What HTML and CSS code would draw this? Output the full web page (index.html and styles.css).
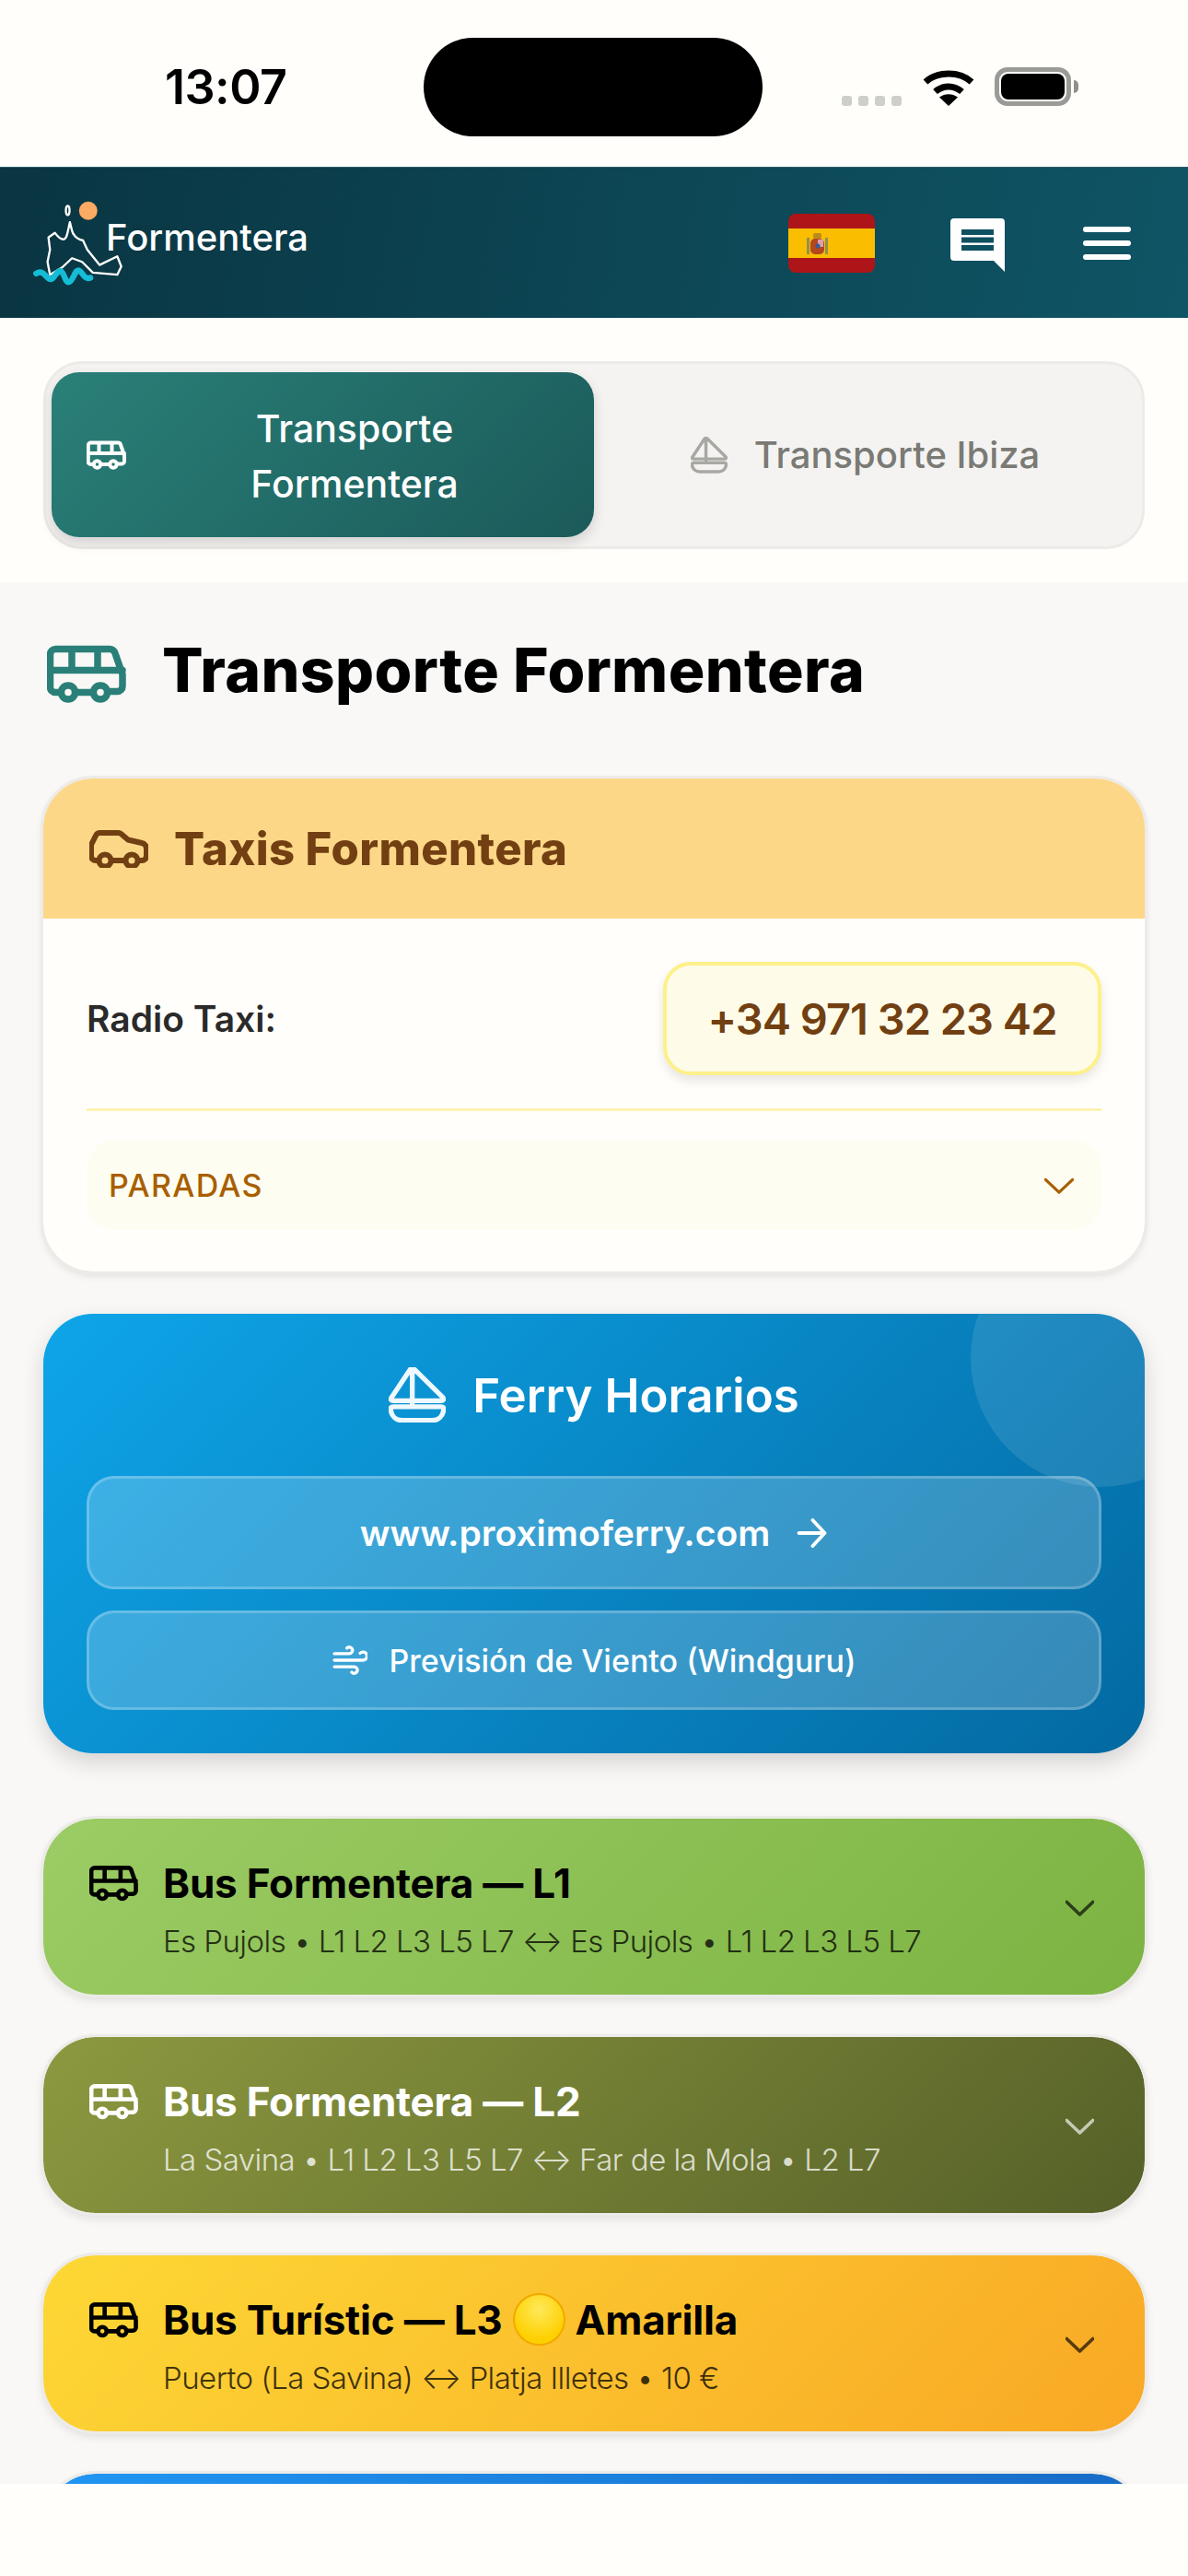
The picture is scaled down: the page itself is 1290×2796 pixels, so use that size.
FILE: index.html
```html
<!DOCTYPE html>
<html lang="es">
<head>
    <meta charset="utf-8" />
    <title>Transporte Formentera</title>
    <link rel="stylesheet" href="styles.css">
</head>
<body>

<svg class="defs" width="0" height="0">
    <symbol id="bus" viewBox="11 11 86 62">
        <path d="M24 62h-4a5.5 5.5 0 0 1-5.500-5.500V21a6 6 0 0 1 6-6H79a6 6 0 0 1 6 4.500l8 23v13a5.500 5.500 0 0 1-5.500 5.500H80M59 62H44M14.700 38H93M38 15v23M66 15v23" />
        <circle cx="34" cy="62" r="7.500" />
        <circle cx="69" cy="62" r="7.500" />
    </symbol>
    <symbol id="boat" viewBox="10 8 58 56">
        <path d="M32 10 13 38.500Q11 42 15 42H63Q67 42 65 38.500L36 10Q34 8 32 10ZM34 10V48M15 48H63Q66 48 66 51C65 58 60 62 54 62H24C18 62 13 58 12 51Q12 48 15 48Z" />
    </symbol>
    <symbol id="chevron" viewBox="6 9 12 6">
        <path d="M6.500 9.500 12 14.700 17.500 9.500" />
    </symbol>
</svg>

<div class="status">
    <span class="clock">13:07</span>
    <div class="island"></div>
    <div class="status-right">
        <div class="signal"><i></i><i></i><i></i><i></i></div>
        <svg class="wifi" viewBox="0 0 56 41">
            <path d="M3 15C16 3 40 3 53 15" />
            <path d="M13.500 25.500C22 18 34 18 42.500 25.500" />
            <path class="wedge" d="M28 41 18 31.500C24 27 32 27 38 31.500Z" />
        </svg>
        <div class="battery"><div class="battery-fill"></div></div>
        <div class="battery-nub"></div>
    </div>
</div>

<header class="topbar">
    <a class="logo" href="#">
        <svg class="logo-mark" viewBox="45 75 295 285">
            <circle class="sun" cx="225" cy="113" r="30" />
            <ellipse class="isle" cx="158" cy="112" rx="6" ry="15" />
            <path class="isle" d="M165 150 172 178C176 192 186 205 208 210L222 240 262 290 320 262 333 295 320 322 240 315 205 280 172 268 140 298 100 322 92 280 100 240 95 200 116 185C124 195 132 208 146 206 156 204 158 180 165 150Z" />
            <path class="wave" d="M55 318C75 305 82 325 97 335S122 305 135 310 148 348 162 346 182 302 195 308 212 340 232 332" />
        </svg>
        <span class="logo-text">Formentera</span>
    </a>
    <div class="topbar-right">
        <svg class="flag" viewBox="0 0 94 64">
            <rect width="94" height="64" fill="#ad1519" />
            <rect y="16" width="94" height="32" fill="#fabd00" />
            <rect x="20" y="26" width="3" height="18" fill="#8f8f50" />
            <rect x="40" y="26" width="3" height="18" fill="#8f8f50" />
            <rect x="24" y="27" width="15" height="17" rx="5" fill="#b3471d" />
            <rect x="32" y="28" width="6" height="8" fill="#d9a0b0" />
            <circle cx="32" cy="35" r="2.500" fill="#3a5a9a" />
            <rect x="27" y="21" width="9" height="6" rx="2" fill="#b98a1c" />
        </svg>
        <svg class="chat" viewBox="0 0 59 58">
            <path class="chat-body" d="M4 0h51a4 4 0 0 1 4 4v54L47 46H4a4 4 0 0 1-4-4V4a4 4 0 0 1 4-4z" />
            <path class="chat-lines" d="M12 12h35v6H12zM12 20.500h35v6H12zM12 29h35v6H12z" />
        </svg>
        <div class="burger"><i></i><i></i><i></i></div>
    </div>
</header>

<section class="tabs-wrap">
    <div class="tabs">
        <a class="tab tab-on" href="#">
            <svg class="icon tab-bus"><use href="#bus" /></svg>
            <span class="tab-label">Transporte<br />Formentera</span>
        </a>
        <a class="tab tab-off" href="#">
            <svg class="icon tab-boat"><use href="#boat" /></svg>
            <span>Transporte Ibiza</span>
        </a>
    </div>
</section>

<main class="main">
    <h1 class="page-title">
        <svg class="icon title-bus"><use href="#bus" /></svg>
        <span class="page-title-text">Transporte Formentera</span>
    </h1>

    <div class="taxi">
        <div class="taxi-head">
            <svg class="icon car" viewBox="12 8 64 41">
                <path d="M22 41h-3a5 5 0 0 1-5-5V24l5-10a5 5 0 0 1 4-3h20a5 5 0 0 1 4 1.500l7 6 15 3.500a6 6 0 0 1 5 6v8a5 5 0 0 1-5 5h-4M51 41H36" />
                <circle cx="29" cy="41" r="6.500" />
                <circle cx="58" cy="41" r="6.500" />
            </svg>
            <h2>Taxis Formentera</h2>
        </div>
        <div class="taxi-body">
            <div class="taxi-row">
                <span class="taxi-label">Radio Taxi:</span>
                <a class="phone" href="#">+34 971 32 23 42</a>
            </div>
            <div class="taxi-line"></div>
            <div class="stops">
                <span>PARADAS</span>
                <svg class="icon stops-arrow"><use href="#chevron" /></svg>
            </div>
        </div>
    </div>

    <div class="ferry">
        <div class="ferry-circle"></div>
        <h2 class="ferry-title">
            <svg class="icon ferry-boat"><use href="#boat" /></svg>
            Ferry Horarios
        </h2>
        <a class="ferry-btn ferry-web" href="#">
            www.proximoferry.com
            <svg class="icon arrow" viewBox="4 4 16 16"><path d="M5 12h14M12.500 5l6.500 7-6.500 7" /></svg>
        </a>
        <a class="ferry-btn ferry-wind" href="#">
            <svg class="icon wind" viewBox="1 3 21 18"><path d="M17.700 7.700a2.500 2.500 0 1 1 1.800 4.300H2M9.600 4.600A2 2 0 1 1 11 8H2M12.600 19.400A2 2 0 1 0 14 16H2" /></svg>
            Previsión de Viento (Windguru)
        </a>
    </div>

    <div class="lines">
        <div class="line line-1">
            <div class="line-text">
                <div class="line-title"><svg class="icon line-bus"><use href="#bus" /></svg>Bus Formentera — L1</div>
                <div class="line-sub">Es Pujols • L1 L2 L3 L5 L7 ↔ Es Pujols • L1 L2 L3 L5 L7</div>
            </div>
            <svg class="icon line-arrow"><use href="#chevron" /></svg>
        </div>
        <div class="line line-2">
            <div class="line-text">
                <div class="line-title"><svg class="icon line-bus"><use href="#bus" /></svg>Bus Formentera — L2</div>
                <div class="line-sub">La Savina • L1 L2 L3 L5 L7 ↔ Far de la Mola • L2 L7</div>
            </div>
            <svg class="icon line-arrow"><use href="#chevron" /></svg>
        </div>
        <div class="line line-3">
            <div class="line-text">
                <div class="line-title"><svg class="icon line-bus"><use href="#bus" /></svg>Bus Turístic — L3<span class="dot"></span>Amarilla</div>
                <div class="line-sub">Puerto (La Savina) ↔ Platja Illetes • 10 €</div>
            </div>
            <svg class="icon line-arrow"><use href="#chevron" /></svg>
        </div>
        <div class="line line-4"></div>
    </div>
</main>

<div class="bottom"></div>

</body>
</html>
```

FILE: styles.css
```css
* { box-sizing: border-box; }
html, body { margin: 0; padding: 0; }
body { width: 1290px; height: 2796px; display: flex; flex-direction: column; overflow: hidden; background: #fffefb; font-family: Inter, "Liberation Sans", sans-serif; color: #000; }
a { color: inherit; text-decoration: none; }
h1, h2 { margin: 0; }
.defs { position: absolute; }
.icon { fill: none; stroke: currentColor; stroke-linecap: round; stroke-linejoin: round; flex: none; display: block; }

/* status bar */
.status { height: 181px; flex: none; display: flex; padding: 41px 119px 0 179px; }
.clock { font-size: 52px; font-weight: 600; line-height: 1; margin-top: 28px; width: 282px; letter-spacing: -.5px; }
.island { width: 369px; height: 107px; border-radius: 54px; background: #000; }
.status-right { display: flex; align-items: flex-end; height: 74px; margin-left: 86px; flex: none; }
.signal { display: flex; gap: 7px; margin-right: 23px; }
.signal i { width: 11px; height: 11px; border-radius: 3px; background: #cfcfca; }
.wifi { width: 56px; height: 41px; fill: none; stroke: #000; stroke-width: 7; margin-right: 22px; }
.wifi .wedge { fill: #000; stroke: none; }
.battery { width: 83px; height: 42px; border: 5px solid #9a9a96; border-radius: 14px; padding: 2px; }
.battery-fill { height: 100%; background: #000; border-radius: 8px; }
.battery-nub { width: 5px; height: 14px; margin: 0 0 14px 3px; background: #8f8f8b; border-radius: 0 6px 6px 0; }

/* top bar */
.topbar { height: 164px; flex: none; display: flex; justify-content: space-between; align-items: center; padding: 0 62px 0 36px; background: linear-gradient(100deg, #0a3542, #0f5565); border-top: 1px solid #2f5a6a; }
.logo { display: flex; align-items: flex-start; }
.logo-mark { width: 98px; height: 95px; }
.logo-mark .sun { fill: #fdab63; }
.logo-mark .isle { fill: none; stroke: #fff; stroke-width: 7; stroke-linejoin: round; }
.logo-mark .wave { fill: none; stroke: #15bcd6; stroke-width: 19; stroke-linecap: round; }
.logo-text { font-size: 40px; font-weight: 500; color: #fff; line-height: 1; margin: 22px 0 0 -19px; }
.topbar-right { display: flex; align-items: center; }
.flag { width: 94px; height: 64px; border-radius: 8px; margin-right: 82px; }
.chat { width: 59px; height: 58px; margin-right: 85px; margin-top: 4px; }
.chat-body { fill: #fff; }
.chat-lines { fill: #0f5060; }
.burger { width: 52px; display: flex; flex-direction: column; gap: 9px; }
.burger i { height: 6px; border-radius: 3px; background: #fff; }

/* tabs */
.tabs-wrap { height: 287px; flex: none; padding: 47px 47px 0; }
.tabs { display: flex; height: 204px; padding: 9px 6px 10px; background: #f4f3f1; border: 3px solid #ecebe8; border-radius: 42px; }
.tab { display: flex; align-items: center; font-size: 40px; font-weight: 500; line-height: 60px; }
.tab-on { flex: none; width: 589px; padding: 3px 24px 0 38px; gap: 12px; font-size: 41px; color: #fff; background: linear-gradient(135deg, #2a8078, #1b5a5a); border-radius: 30px; box-shadow: 0 6px 14px rgba(0, 0, 0, .14); }
.tab-on .icon { margin-top: -3px; }
.tab-label { flex: 1; text-align: center; }
.tab-bus { width: 43px; height: 32px; stroke-width: 8; }
.tab-off { flex: 1; justify-content: center; gap: 29px; color: #7a7a75; }
.tab-boat { width: 40px; height: 40px; stroke: #a8a8a3; stroke-width: 5; }

/* main */
.main { flex: 1; min-height: 0; overflow: hidden; background: #f9f8f6; padding: 68px 47px 0; }
.page-title { display: flex; align-items: center; gap: 39px; height: 63px; padding-left: 4px; font-size: 66px; font-weight: 800; letter-spacing: .4px; line-height: 1; margin-bottom: 82px; }
.page-title-text { margin-bottom: 10px; }
.title-bus { width: 86px; height: 63px; color: #2a8078; stroke-width: 7.500; }

/* taxi */
.taxi { background: #fffefb; outline: 3px solid #ecebe8; border-radius: 54px; overflow: hidden; box-shadow: 0 4px 10px rgba(0, 0, 0, .12); }
.taxi-head { height: 152px; display: flex; align-items: center; gap: 28px; padding-left: 50px; background: #fdd788; color: #713f12; }
.taxi-head h2 { font-size: 49px; font-weight: 800; letter-spacing: .4px; }
.car { width: 64px; height: 41px; stroke-width: 6; }
.taxi-body { padding: 47px 47px 45px; }
.taxi-row { display: flex; justify-content: space-between; align-items: center; }
.taxi-label { font-size: 39px; font-weight: 600; color: #2a2a2a; }
.phone { width: 476px; height: 123px; display: flex; align-items: center; justify-content: center; font-size: 47px; font-weight: 600; letter-spacing: -1px; color: #713f12; background: #fefce8; border: 4px solid #fef08a; border-radius: 30px; box-shadow: 0 6px 12px rgba(0, 0, 0, .1); }
.taxi-line { height: 3px; margin: 36px 0 32px; background: #fef3b0; }
.stops { height: 97px; display: flex; justify-content: space-between; align-items: center; padding: 0 30px 0 24px; background: #fefdf1; border-radius: 30px; color: #a85f00; font-size: 34px; font-weight: 500; letter-spacing: 1.300px; }
.stops-arrow { width: 32px; height: 18px; stroke-width: 1.200; }

/* ferry */
.ferry { position: relative; margin-top: 46px; padding: 56px 47px 47px; overflow: hidden; border-radius: 54px; color: #fff; background: linear-gradient(135deg, #0ea5e9, #0369a1); box-shadow: 0 10px 24px rgba(0, 0, 0, .15); }
.ferry-circle { position: absolute; top: -92px; right: -91px; width: 280px; height: 280px; border-radius: 50%; background: rgba(255, 255, 255, .1); }
.ferry-title { position: relative; display: flex; justify-content: center; align-items: center; gap: 29px; height: 64px; font-size: 51px; font-weight: 600; margin-bottom: 56px; }
.ferry-boat { width: 62px; height: 60px; stroke: #eef8fd; stroke-width: 5; }
.ferry-btn { position: relative; display: flex; justify-content: center; align-items: center; background: rgba(255, 255, 255, .2); border: 3px solid rgba(255, 255, 255, .22); border-radius: 30px; }
.ferry-web { height: 123px; gap: 28px; font-size: 39px; font-weight: 600; margin-bottom: 23px; }
.ferry-wind { height: 108px; gap: 24px; font-size: 34px; font-weight: 500; }
.arrow { width: 35px; height: 32px; stroke-width: 1.900; }
.wind { width: 38px; height: 32px; stroke-width: 1.900; }

/* bus lines */
.lines { display: flex; flex-direction: column; gap: 46px; margin-top: 71px; }
.line { flex: none; height: 191px; display: flex; align-items: center; padding: 0 55px 0 50px; border-radius: 57px; outline: 3px solid #ecebe8; box-shadow: 0 5px 12px rgba(0, 0, 0, .12); color: #000; }
.line-1 { background: linear-gradient(135deg, #9ccc65, #7cb342); }
.line-2 { background: linear-gradient(135deg, #8d993f, #556028); color: #fff; }
.line-3 { background: linear-gradient(135deg, #fdd835, #f9a825); }
.line-4 { background: linear-gradient(135deg, #2196f3, #1565c0); }
.line-text { flex: 1; padding-top: 6px; }
.line-title { display: flex; align-items: center; font-size: 44px; font-weight: 700; line-height: 60px; letter-spacing: -.2px; }
.line-bus { width: 53px; height: 40px; margin-right: 27px; stroke-width: 7.500; }
.dot { width: 57px; height: 57px; margin: 0 11px; border-radius: 50%; border: 2px solid #f2a900; background: radial-gradient(circle at 50% 30%, #ffe95a, #fdd000 70%); }
.line-sub { padding-left: 80px; margin-top: 8px; font-size: 33px; font-weight: 300; line-height: 50px; letter-spacing: -.55px; opacity: .75; }
.line-arrow { width: 31px; height: 18px; margin-top: 3px; stroke-width: 1.400; opacity: .65; }

.bottom { height: 100px; flex: none; background: #fffefb; }
```
